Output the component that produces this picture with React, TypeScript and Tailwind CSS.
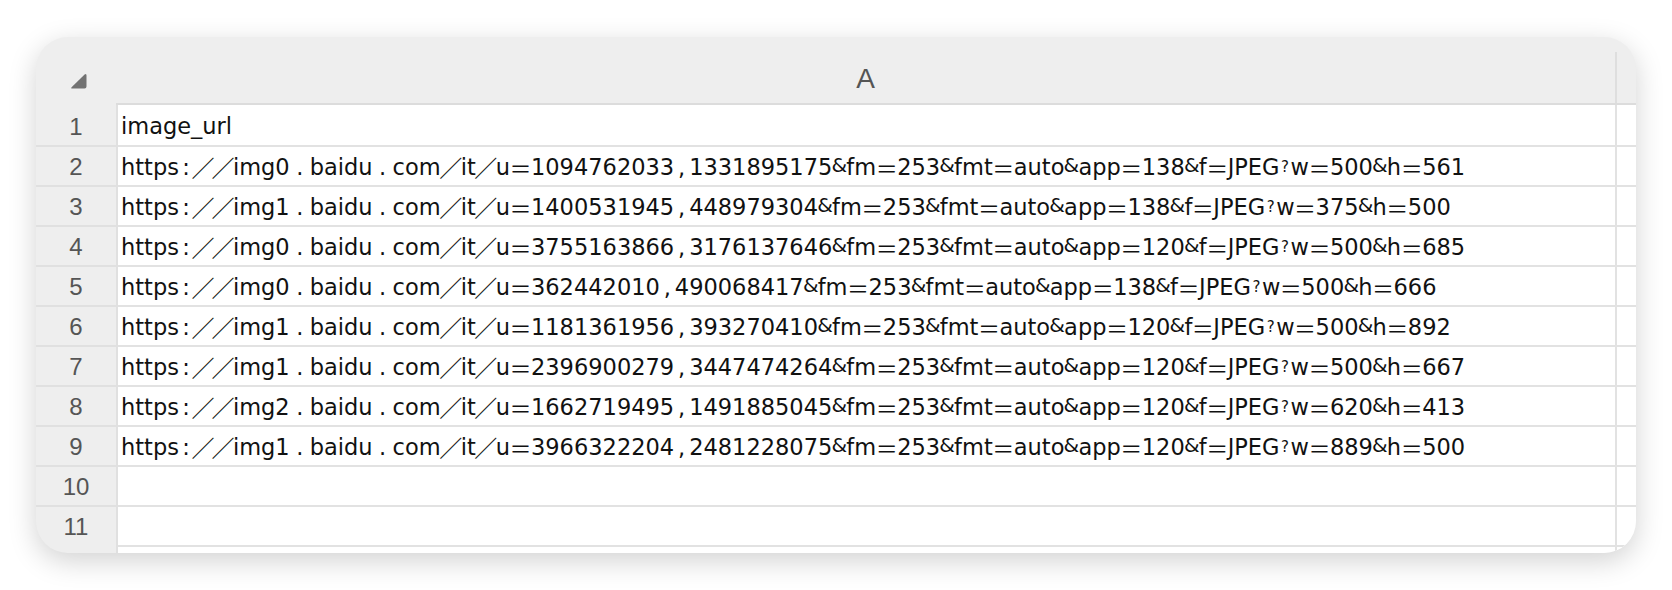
import React from "react";

const rows: string[] = [
  "image_url",
  "https://img0.baidu.com/it/u=1094762033,1331895175&fm=253&fmt=auto&app=138&f=JPEG?w=500&h=561",
  "https://img1.baidu.com/it/u=1400531945,448979304&fm=253&fmt=auto&app=138&f=JPEG?w=375&h=500",
  "https://img0.baidu.com/it/u=3755163866,3176137646&fm=253&fmt=auto&app=120&f=JPEG?w=500&h=685",
  "https://img0.baidu.com/it/u=362442010,490068417&fm=253&fmt=auto&app=138&f=JPEG?w=500&h=666",
  "https://img1.baidu.com/it/u=1181361956,393270410&fm=253&fmt=auto&app=120&f=JPEG?w=500&h=892",
  "https://img1.baidu.com/it/u=2396900279,3447474264&fm=253&fmt=auto&app=120&f=JPEG?w=500&h=667",
  "https://img2.baidu.com/it/u=1662719495,1491885045&fm=253&fmt=auto&app=120&f=JPEG?w=620&h=413",
  "https://img1.baidu.com/it/u=3966322204,2481228075&fm=253&fmt=auto&app=120&f=JPEG?w=889&h=500",
  "",
  "",
];

function Cell({ text }: { text: string }) {
  const parts: React.ReactNode[] = [];
  let buf = "";
  const flush = (k: string) => {
    if (buf) {
      parts.push(<span key={"t" + k}>{buf}</span>);
      buf = "";
    }
  };
  for (let i = 0; i < text.length; i++) {
    const c = text[i];
    const k = String(i);
    if (c === ":") {
      flush(k);
      parts.push(
        <span key={k} className="inline-flex justify-center w-[14px]">:</span>
      );
    } else if (c === "/") {
      flush(k);
      parts.push(
        <span key={k} className="inline-flex justify-center w-[20px] font-['Noto_Sans_CJK_JP',sans-serif] text-[23px]">／</span>
      );
    } else if (c === "." || c === ",") {
      flush(k);
      parts.push(
        <span key={k} className={c === "." ? "inline-flex justify-center w-[20px]" : "inline-flex justify-center w-[15px]"}>{c}</span>
      );
    } else if (c === "=") {
      flush(k);
      parts.push(
        <span key={k} className="inline-flex justify-center w-[21px] font-['Noto_Sans_CJK_JP',sans-serif] text-[22px]">＝</span>
      );
    } else if (c === "&") {
      flush(k);
      parts.push(
        <span key={k} className="inline-flex justify-center w-[14px] text-[20px] -translate-y-[2px]">&amp;</span>
      );
    } else if (c === "?") {
      flush(k);
      parts.push(
        <span key={k} className="inline-block w-[11px] text-center text-[15px]">?</span>
      );
    } else {
      buf += c;
    }
  }
  flush("end");
  return <>{parts}</>;
}

export default function App() {
  return (
    <div className="w-[1672px] h-[590px] bg-white pt-[37px] pl-[36px]">
      <div className="w-[1600px] h-[516px] rounded-[32px] overflow-hidden bg-[#eeeeee] shadow-[0_8px_28px_rgba(0,0,0,0.18)] flex flex-col">
        {/* header */}
        <div className="h-[68px] flex shrink-0">
          <div className="w-[80px] h-full flex items-end justify-end pr-[29px] pb-[16px]">
            <svg width="17" height="16" viewBox="0 0 17 16">
              <path d="M14.6 1.4 Q16.5 0 16.5 2.4 L16.5 13.5 Q16.5 15.5 14.5 15.5 L2.6 15.5 Q0.2 15.5 1.8 13.9 Z" fill="#727272" />
            </svg>
          </div>
          <div className="flex-1 flex flex-col">
            <div className="flex-1 flex">
              <div className="w-[1499px] flex items-center justify-center pt-[18px] text-[28px] text-[#555555] font-['Liberation_Sans',sans-serif]">
                A
              </div>
              <div className="w-[2px] mt-[15px] bg-[#dedede]" />
              <div className="flex-1" />
            </div>
            <div className="h-[2px] bg-[#dcdcdc]" />
          </div>
        </div>
        {/* body */}
        {rows.map((r, i) => (
          <div key={i} className="h-[40px] flex shrink-0">
            <div className="w-[80px] flex flex-col">
              {i > 0 ? <div className="h-[2px] bg-[#e0e0e0]" /> : <div className="h-[2px]" />}
              <div className="flex-1 flex items-center justify-center text-[24px] text-[#555555] font-['Liberation_Sans',sans-serif] leading-none pt-[2px]">
                {i + 1}
              </div>
            </div>
            <div className="w-[2px] bg-[#e0e0e0]" />
            <div className="flex-1 bg-white flex flex-col">
              {i > 0 && <div className="h-[2px] bg-[#e2e2e2]" />}
              <div className="flex-1 flex">
                <div className="w-[1497px] flex items-center pl-[3px] pt-[2px] text-[22.5px] text-[#111111] whitespace-nowrap font-['DejaVu_Sans',sans-serif] leading-none">
                  <Cell text={r} />
                </div>
                <div className="w-[2px] bg-[#e2e2e2]" />
                <div className="flex-1" />
              </div>
            </div>
          </div>
        ))}
        <div className="flex-1 flex">
          <div className="w-[80px]" />
          <div className="w-[2px] bg-[#e0e0e0]" />
          <div className="flex-1 bg-white flex flex-col">
            <div className="h-[2px] bg-[#e2e2e2]" />
            <div className="flex-1 flex">
              <div className="w-[1497px]" />
              <div className="w-[2px] bg-[#e2e2e2]" />
              <div className="flex-1" />
            </div>
          </div>
        </div>
      </div>
    </div>
  );
}
